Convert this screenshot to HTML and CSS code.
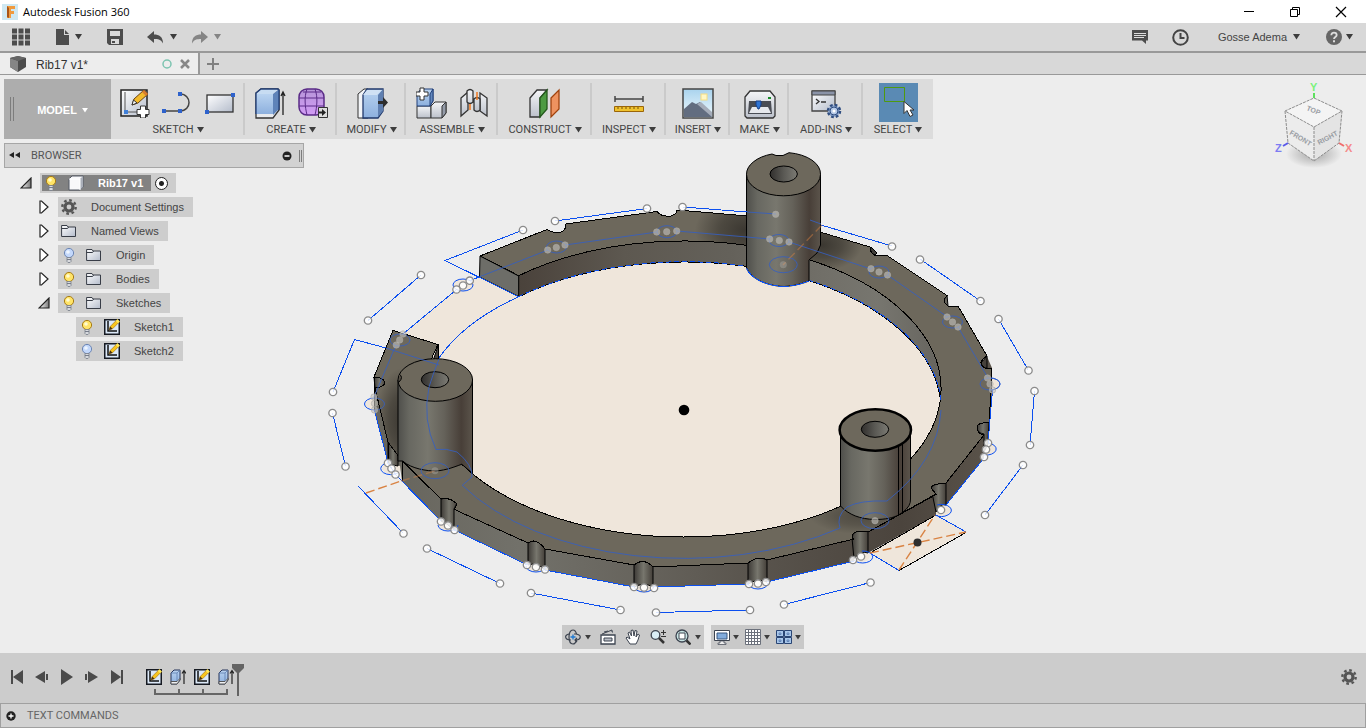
FILE: index.html
```html
<!DOCTYPE html>
<html lang="en">
<head>
<meta charset="utf-8">
<title>Autodesk Fusion 360</title>
<link rel="stylesheet" href="styles.css">
</head>
<body>
<svg class="defs" width="0" height="0" aria-hidden="true">
  <defs>
    <linearGradient id="gPaper" x1="0" y1="0" x2="1" y2="1"><stop offset="0" stop-color="#fff"/><stop offset="1" stop-color="#b4bccb"/></linearGradient>
    <linearGradient id="gBlue" x1="0" y1="0" x2="0" y2="1"><stop offset="0" stop-color="#b9d3f0"/><stop offset="1" stop-color="#8db0de"/></linearGradient>
    <linearGradient id="gMetal" x1="0" y1="0" x2="0" y2="1"><stop offset="0" stop-color="#f4f5f7"/><stop offset="1" stop-color="#bcc1cb"/></linearGradient>
    <linearGradient id="gPurple" x1="0" y1="0" x2="0" y2="1"><stop offset="0" stop-color="#b695d8"/><stop offset="1" stop-color="#d29cf5"/></linearGradient>
    <linearGradient id="gSky" x1="0" y1="0" x2="0" y2="1"><stop offset="0" stop-color="#a9d3ee"/><stop offset="1" stop-color="#f0fafd"/></linearGradient>
    <linearGradient id="gTri" x1="0" y1="0" x2="1" y2="0"><stop offset="0" stop-color="#fff"/><stop offset="1" stop-color="#777"/></linearGradient>
    <symbol id="bulbOn" viewBox="0 0 16 16"><circle cx="8" cy="6" r="4.600" fill="#ffe468" stroke="#a87c14"/><circle cx="7" cy="5" r="1.800" fill="#fffbd0"/><path d="M6 10.500h4v4l-1 1H7l-1-1z" fill="#d8dade" stroke="#777d8a" stroke-width=".8"/><path d="M6 12.500h4" stroke="#777d8a"/></symbol>
    <symbol id="bulbOff" viewBox="0 0 16 16"><circle cx="8" cy="6" r="4.600" fill="#c3d8fb" stroke="#6c86b4"/><circle cx="7" cy="5" r="1.800" fill="#eef5ff"/><path d="M6 10.500h4v4l-1 1H7l-1-1z" fill="#d8dade" stroke="#777d8a" stroke-width=".8"/><path d="M6 12.500h4" stroke="#777d8a"/></symbol>
    <symbol id="folder" viewBox="0 0 16 16"><path d="M.6 13.500V2.500h5.400l1 1.500h7.500v9.500z" fill="url(#gPaper)" stroke="#383d47"/><path d="M.6 5.500h6l1-1.500" fill="none" stroke="#383d47"/></symbol>
    <symbol id="gear" viewBox="0 0 16 16"><circle cx="8" cy="8" r="4" fill="none" stroke="#555" stroke-width="3.200"/><circle cx="8" cy="8" r="6.700" fill="none" stroke="#555" stroke-width="2.400" stroke-dasharray="2.630 2.630"/></symbol>
    <symbol id="box" viewBox="0 0 16 16"><path d="M1 4l3-3h11v11l-3 3H1z" fill="#f8f8fa" stroke="#555b66"/><path d="M12 4l3-3v11l-3 3z" fill="#a9aeb8"/><path d="M1 4h11v11" fill="none" stroke="#fff"/></symbol>
    <symbol id="sketch" viewBox="0 0 16 16"><rect x=".75" y=".75" width="14.500" height="14.500" fill="#dbe8f8" stroke="#161a22" stroke-width="1.500"/><path d="M4 2v10h9" fill="none" stroke="#111" stroke-width="1.500"/><path d="M5 11l1.200-3.500 7-7 2.300 2.300-7 7z" fill="#f9c51c" stroke="#9a6b0c" stroke-width=".6"/><path d="M5 11l1.200-3.500 2.300 2.300z" fill="#473014"/><path d="M11.800 2l1.800-1.800 2.200 2.200L14 4.200z" fill="#ffe95c"/></symbol>
    <symbol id="extrude" viewBox="0 0 16 16"><path d="M1 4l3-3h6v10l-3 4H1z" fill="url(#gBlue)" stroke="#26345a"/><path d="M1 12.500h6l3-3V11l-3 4H1z" fill="#f0f1f4" stroke="#555"/><path d="M7 12V4l3-3M1 4h6" fill="none" stroke="#5e7eb0" stroke-width=".8"/><path d="M14 15V2M12 4.500l2-3 2 3" fill="none" stroke="#222" stroke-width="1.200"/></symbol>
    <symbol id="caret" viewBox="0 0 7 6"><path d="M0 0h7L3.500 5.500z" fill="currentColor"/></symbol>
    <symbol id="shut" viewBox="0 0 10 14"><path d="M1 1h1.500L9 7l-6.500 6H1z" fill="#fff" stroke="#222" stroke-width="1.200"/></symbol>
    <symbol id="open" viewBox="0 0 12 12"><path d="M11 1v10H1z" fill="url(#gTri)" stroke="#222" stroke-width="1.200"/></symbol>
  </defs>
</svg>

<header class="titlebar">
  <svg class="logo" viewBox="0 0 16 16"><rect width="16" height="16" fill="#cfe8f2"/><path d="M5 2h8v3H9v2h3v3H9v4H5z" fill="#f09a3e"/><path d="M5 2l2 2v10l-2-1z" fill="#a95517"/></svg>
  <span class="title">Autodesk Fusion 360</span>
  <div class="win">
    <button aria-label="Minimize"><svg width="12" height="12"><path d="M1 5.500h10" stroke="#000"/></svg></button>
    <button aria-label="Restore"><svg width="12" height="12"><path d="M1.500 3.500h7v7h-7zM3.500 3V1.500h7v7H9" fill="none" stroke="#000"/></svg></button>
    <button aria-label="Close"><svg width="12" height="12"><path d="M1 1l10 10M11 1L1 11" stroke="#000" stroke-width="1.200"/></svg></button>
  </div>
</header>

<nav class="appbar">
  <button class="a-grid" aria-label="Data panel"><svg width="18" height="18"><path d="M0 3h18M0 9h18M0 15h18" stroke="#4d4d4d" stroke-width="5" stroke-dasharray="5 1.500"/></svg></button>
  <button class="a-file" aria-label="File"><svg width="14" height="16"><path d="M0 0h8v6h5v10H0z" fill="#4d4d4d"/><path d="M9 1l4 4H9z" fill="#4d4d4d"/></svg><svg class="caret"><use href="#caret"/></svg></button>
  <button class="a-save" aria-label="Save"><svg width="16" height="16"><path d="M0 0h16v16H2l-2-2z" fill="#4d4d4d"/><path d="M3 2h10v5H3zM4 10h8v5H4z" fill="#dadada"/><path d="M5 12h3v2H5z" fill="#4d4d4d"/></svg></button>
  <button class="a-undo" aria-label="Undo"><svg width="17" height="13"><path d="M0 6l7-6v3.500c5 0 9 2 9 9-2-4-5-4.500-9-4.500v4z" fill="#4d4d4d"/></svg><svg class="caret"><use href="#caret"/></svg></button>
  <button class="a-redo" aria-label="Redo"><svg width="17" height="13"><path d="M17 6l-7-6v3.500c-5 0-9 2-9 9 2-4 5-4.500 9-4.500v4z" fill="#858585"/></svg><svg class="caret"><use href="#caret"/></svg></button>
  <span class="grow"></span>
  <button class="a-chat" aria-label="Notifications"><svg width="16" height="16"><path d="M0 1h16v10.500h-2V15l-4-3.500H0z" fill="#4d4d4d"/><path d="M2 4.500h12M2 6.500h12M2 8.500h10" stroke="#ddd"/></svg></button>
  <button class="a-clock" aria-label="Job status"><svg width="17" height="17"><circle cx="8.500" cy="8.500" r="7.300" fill="none" stroke="#444" stroke-width="2"/><path d="M8.500 4v5h4" fill="none" stroke="#444" stroke-width="2"/></svg></button>
  <button class="a-user">Gosse Adema <svg class="caret"><use href="#caret"/></svg></button>
  <button class="a-help" aria-label="Help"><svg width="16" height="16"><circle cx="8" cy="8" r="8" fill="#666"/><path d="M5.300 6.200C5.300 2.600 10.700 2.800 10.700 6 10.700 8 8 8 8 10" fill="none" stroke="#ddd" stroke-width="1.800"/><path d="M7 11.300h2v2H7z" fill="#ddd"/></svg><svg class="caret"><use href="#caret"/></svg></button>
</nav>

<div class="tabs">
  <div class="tab">
    <svg width="16" height="16"><path d="M0 2l8-2 8 2v9l-8 5-8-5z" fill="#4c4c4c"/><path d="M0 2l8 3v11l-8-5z" fill="#858585"/><path d="M0 2l8-2 8 2-8 3z" fill="#666"/></svg>
    <span class="tabname">Rib17 v1*</span>
    <svg width="10" height="10"><circle cx="5" cy="5" r="4" fill="none" stroke="#7cc4b0" stroke-width="1.500"/></svg>
    <button aria-label="Close tab"><svg width="10" height="10"><path d="M1 1l8 8M9 1L1 9" stroke="#888" stroke-width="2.500"/></svg></button>
  </div>
  <button class="newtab" aria-label="New tab"><svg width="12" height="12"><path d="M0 6h12M6 0v12" stroke="#808080" stroke-width="2"/></svg></button>
</div>

<main class="work">
<svg class="scene" viewBox="0 75 1366 578" role="img" aria-label="Rib model with three posts">
  <defs>
    <linearGradient id="post" x1="0" y1="0" x2="1" y2="0"><stop offset="0" stop-color="#4f4f4b"/><stop offset=".15" stop-color="#686861"/><stop offset=".4" stop-color="#78776e"/><stop offset=".62" stop-color="#65625a"/><stop offset=".85" stop-color="#483f38"/><stop offset="1" stop-color="#5b544b"/></linearGradient>
    <linearGradient id="bore" x1="0" y1="0" x2="1" y2="0"><stop offset="0" stop-color="#312f2d"/><stop offset=".5" stop-color="#5a5954"/><stop offset="1" stop-color="#7c7b74"/></linearGradient>
    <linearGradient id="cut" x1="0" y1="0" x2="1" y2="0"><stop offset="0" stop-color="#3d3a36"/><stop offset=".5" stop-color="#77766d"/><stop offset="1" stop-color="#443f39"/></linearGradient>
    <linearGradient id="wall" gradientUnits="userSpaceOnUse" x1="518" y1="0" x2="941" y2="0"><stop offset="0" stop-color="#4a423b"/><stop offset=".25" stop-color="#5d5850"/><stop offset=".5" stop-color="#64615a"/><stop offset=".72" stop-color="#716f68"/><stop offset=".85" stop-color="#77766f"/><stop offset="1" stop-color="#66645e"/></linearGradient>
    <linearGradient id="rim" gradientUnits="userSpaceOnUse" x1="402" y1="0" x2="990" y2="0"><stop offset="0" stop-color="#68665e"/><stop offset=".2" stop-color="#72716a"/><stop offset=".4" stop-color="#67645d"/><stop offset=".6" stop-color="#59544d"/><stop offset=".85" stop-color="#4b443d"/><stop offset="1" stop-color="#5a534a"/></linearGradient>
    <radialGradient id="shade"><stop offset="0" stop-color="#26231f" stop-opacity=".7"/><stop offset=".5" stop-color="#26231f" stop-opacity=".45"/><stop offset="1" stop-color="#26231f" stop-opacity="0"/></radialGradient>
    <clipPath id="faceClip"><use href="#facePath"/></clipPath>
    <g id="dot"><circle r="3.700" fill="#fff" fill-opacity=".85" stroke="#8b8b8b" stroke-width="1.300"/></g>
    <g id="dim"><circle r="3.200" fill="#c4c3be" fill-opacity=".6" stroke="#aaa9a4" stroke-opacity=".6"/></g>
    <ellipse id="ring" rx="10" ry="6"/>
  </defs>

  <g fill="#efe6db">
    <ellipse cx="684" cy="410" rx="257" ry="148"/>
    <path d="M519 297L479 277 466 283 456 290 403 334 400 350 440 400z"/>
    <path d="M935 515l31 17-67 38-29-17z"/>
    <use href="#ring" x="463" y="285"/><use href="#ring" x="375" y="404"/><use href="#ring" x="392" y="468"/><use href="#ring" x="448" y="525"/><use href="#ring" x="536" y="566"/><use href="#ring" x="644" y="587"/><use href="#ring" x="758" y="583"/><use href="#ring" x="860" y="556"/><use href="#ring" x="941" y="510"/><use href="#ring" x="986" y="449"/><use href="#ring" x="990" y="384"/>
  </g>

  <path fill="url(#rim)" d="M374 377v33l14 53 12 3 2 15 39 40 4-60-40-40zM454 509v21l74 35v-22zM545 549v21l89 17v-22zM653 566v21l95-3v-21zM767 560v22l87-21v-22zM868 531v22l68-38v-21zM946 483v22l38-47v-23zM985 352l7 16v25l-4 50-4-8-8-8z"/>
  <g fill="url(#cut)" stroke="#000">
    <path d="M388 464v-22l10-1v25z"/><path d="M441 521v-22q8-3 16 4l-3 6v21q-7-7-13-9z"/><path d="M528 565v-22q8-6 17 1v26q-8-8-17-5z"/><path d="M634 587v-22q9-8 19 0v22q-9-5-19 0z"/><path d="M748 584v-21q8-9 19-3v22q-9-4-19 2z"/><path d="M852 538q0-9 16-7v22q-8-3-14 6z"/><path d="M931 488q3-5 15-5v22q-6-2-10 7z"/><path d="M989 422q-12 0-12 5 0 6 7 7v18l4-8z"/>
    <path d="M374 377q12 0 11 6-1 5-10 5z"/><path d="M871 247q-2 6 4 8l2-2zM947 295l-3 5v4l4 2zM987 356l-6 7q1 5 4 5h2z"/>
  </g>
  <path id="facePath" fill="#6d685c" stroke="#000" shape-rendering="crispEdges" d="M480 256L547 229.500Q552 233 560 232.500 566 231 566 224L657 211.500Q661 217 671 216 677 214 677 210L748 216 820 232 870 247Q870 254 877 256L887 255.500 947 295.500Q941 301 948 306L958 306 987 356Q976 363 985 368L992 368 991 393 989 422Q977 423 977 427 977 434 984 435L946 483Q931 484 931 488L936 494 868 532Q852 529 852 538L854 539 767 560Q758 555 748 563L653 567Q643 557 634 565L545 549Q536 537 528 543L454.500 509.500 457 504Q450 497 441 499L402 461 388 442 375 388Q385 387 385 382 382 377 374 377L393 330.500 438 344.500A257 148 0 0 0 684 537 257 148 0 0 0 941 389 257 148 0 0 0 518.700 275.700z"/>
  <g clip-path="url(#faceClip)">
    <ellipse cx="745" cy="230" rx="50" ry="34" fill="url(#shade)"/><ellipse cx="822" cy="245" rx="40" ry="26" fill="url(#shade)"/><ellipse cx="402" cy="420" rx="26" ry="52" fill="url(#shade)"/><ellipse cx="860" cy="516" rx="50" ry="18" fill="url(#shade)" opacity=".6"/>
  </g>
  <path fill="url(#wall)" stroke="#000" shape-rendering="crispEdges" d="M518.700 275.700A257 148 0 0 1 940.400 399.500 257 148 0 0 0 518.700 296.700z"/>
  <path fill="#6d6d68" stroke="#000" d="M480 256l38.700 20v20.500L479.500 277z"/>
  <path fill="#4b443d" stroke="#000" d="M438.500 344.500v15h-5z"/>
  <path fill="none" stroke="#0b4ff0" stroke-dasharray="5 3" shape-rendering="crispEdges" d="M518.700 296.700A257 148 0 0 1 941 400"/>

  <g stroke="#000" stroke-width="1">
    <path fill="url(#post)" d="M746.500 174.500V268C750 278 766 286 784 286.500 795 286 804 283 809 281V260L817 253 820.500 245V174.500z"/>
    <path fill="#6d685c" d="M746.500 174.500A37 21.300 0 0 1 772 154L776 155.500H783L789 152.700A37 21.300 0 0 1 820.500 174.500 37 21.300 0 0 1 746.500 174.500z"/>
    <ellipse cx="783.700" cy="174" rx="13.700" ry="8" fill="url(#bore)"/>
    <path fill="url(#post)" d="M398 380V461L402.500 461C412 469 427 471 436 471 447 470 454 467 461.700 464.300L472.500 473V380z"/>
    <ellipse cx="435.300" cy="380" rx="37.300" ry="21.300" fill="#6d685c"/><path d="M399 374q5 3 0 8" fill="#555046"/>
    <ellipse cx="435" cy="379.700" rx="13.700" ry="8" fill="url(#bore)"/>
    <path fill="url(#post)" d="M840.500 430V506C849 515 860 519 875 519.500 885 519.500 893 518 898.500 515L903 512Q911 506 910.500 499V430z"/>
    <path d="M898.500 444v71M902.500 442v70" fill="none"/>
    <ellipse cx="875.300" cy="430" rx="35.700" ry="20.700" fill="#6d685c" stroke-width="2.500"/>
    <ellipse cx="875" cy="429.300" rx="13.700" ry="8" fill="url(#bore)"/>
    <path d="M402.500 461l39 38.500M402.500 461v20M388 442v22M869 531.500l68-37.500M374.500 377v33" fill="none" shape-rendering="crispEdges"/>
    <path d="M899 570.500l67-38M870 553l66-38" fill="none" shape-rendering="crispEdges"/>
  </g>

  <g fill="none" stroke="#0b4ff0" shape-rendering="crispEdges">
    <path d="M523 230L445 260.500 518.700 296.700M555 221l92-12.500M683 207l64 5M821 225l71 21M920 259l60.500 42M998.500 319l30 51.500M1034.500 391l-4.500 54M1023 465l-38 50M870.500 582.500L784 604.500M750 610l-94 2.500M620.500 610L531 593M500 583.500l-73-35M403.500 533.500L358 486M345.500 466.500L332.500 413M333 392l21.500-52.500L386 348M368 320.500L421 275"/>
    <path d="M479 277l-10 4M456 290l-53 44M374.500 410l13.500 53 8 12 45 46M454.500 530l73 35M545 570l89 17M654 587l94-3M767 582l87-21M870 553l29 17.500M936 515l30 17M946 505l38-47M992.500 390l-4.500 53M746.500 268C750 278 766 286 784 286.500 795 286 804 283 809 281M518.700 296.700A257 148 0 0 0 439 358"/>
    <g shape-rendering="auto"><use href="#ring" x="463" y="285"/><path d="M374.500 398a10 6 0 0 0 0 12M384 464a10 6 0 1 0 14 9M438 525a10 6 0 0 0 20 0M526 566a10 6 0 0 0 20 0M634 586a10 6 0 1 0 20 0M748 583a10 6 0 1 0 20 0M854 560a10 6 0 1 0 8-9M937 505a10 6 0 1 1-2 10M988 443a10 6 0 1 1-4 12M990 378a10 6 0 0 1 0 12"/></g>
  </g>
  <g fill="none" stroke="#365fc0" stroke-opacity=".85">
    <path d="M479 277l69-27M565 245l92-13M677 231l93 8M789 242l82 27M887.500 275l60 42M958 327l30 51M396 345l-22 52M747 212l29 2M810 220l11 4M386 348l53 17"/>
    <use href="#ring" x="400" y="340"/><use href="#ring" x="556.500" y="247"/><use href="#ring" x="667" y="231.700"/><use href="#ring" x="779" y="240.500"/><use href="#ring" x="879" y="272"/><use href="#ring" x="952.500" y="322"/><use href="#ring" x="990" y="384"/>
    <path d="M374.500 398a10 6 0 0 1 0 12"/>
    <path d="M941 410Q938 461 887 501 860 500 847 507 836 516 840 528A257 148 0 0 1 462.300 485.300L472 477Q473 465 457 452 446 448 436 449.500 422 420 429 387 434 371 439 359"/>
    <ellipse cx="783.300" cy="264.700" rx="14" ry="8"/><ellipse cx="435" cy="470.700" rx="14" ry="8"/><ellipse cx="875" cy="520.700" rx="14" ry="8"/>
  </g>
  <g fill="none" stroke="#d98343" stroke-width="1.400" stroke-dasharray="9 4"><path d="M899 570l36-55M870 553l96-21M366 493l35-12"/><path d="M401 481l34-10M822 225l-39 40" stroke-opacity=".45"/></g>

  <g>
    <use href="#dot" x="523" y="230"/><use href="#dot" x="555" y="221"/><use href="#dot" x="647" y="208.500"/><use href="#dot" x="682.500" y="207"/><use href="#dot" x="892" y="246.500"/><use href="#dot" x="920" y="259.500"/><use href="#dot" x="980.500" y="301"/><use href="#dot" x="998.500" y="319"/><use href="#dot" x="1028.500" y="370.500"/><use href="#dot" x="1034.500" y="391"/><use href="#dot" x="1030" y="445"/><use href="#dot" x="1023" y="465"/><use href="#dot" x="985" y="515"/><use href="#dot" x="870.500" y="582.500"/><use href="#dot" x="784" y="604.500"/><use href="#dot" x="750" y="610"/><use href="#dot" x="656" y="612.500"/><use href="#dot" x="620.500" y="610"/><use href="#dot" x="531" y="593"/><use href="#dot" x="500" y="583.500"/><use href="#dot" x="427" y="548.500"/><use href="#dot" x="403.500" y="533.500"/><use href="#dot" x="345.500" y="466.500"/><use href="#dot" x="332.500" y="413"/><use href="#dot" x="333" y="392"/><use href="#dot" x="368" y="320.500"/><use href="#dot" x="421" y="275"/>
    <use href="#dot" x="456.500" y="289.500"/><use href="#dot" x="463" y="285.500"/><use href="#dot" x="469.700" y="280.700"/><use href="#dot" x="388" y="463"/><use href="#dot" x="391.500" y="468.500"/><use href="#dot" x="395.500" y="474.500"/><use href="#dot" x="441" y="521.500"/><use href="#dot" x="448" y="525.500"/><use href="#dot" x="454.500" y="530"/><use href="#dot" x="527" y="565"/><use href="#dot" x="536" y="567"/><use href="#dot" x="545" y="569.500"/><use href="#dot" x="634" y="587"/><use href="#dot" x="644" y="587.500"/><use href="#dot" x="654" y="588"/><use href="#dot" x="749" y="584"/><use href="#dot" x="758" y="583.500"/><use href="#dot" x="766" y="582"/><use href="#dot" x="853" y="560"/><use href="#dot" x="861" y="556.500"/><use href="#dot" x="941" y="510"/><use href="#dot" x="988" y="443"/><use href="#dot" x="986" y="449.500"/><use href="#dot" x="984" y="457"/>
  </g>
  <g>
    <use href="#dim" x="403" y="334"/><use href="#dim" x="399.700" y="340"/><use href="#dim" x="396.300" y="345"/><use href="#dim" x="374" y="397"/><use href="#dim" x="374.500" y="403.500"/><use href="#dim" x="374.500" y="410"/><use href="#dim" x="547.700" y="250"/><use href="#dim" x="556.300" y="247.500"/><use href="#dim" x="565" y="245"/><use href="#dim" x="656.700" y="232"/><use href="#dim" x="666.700" y="231.700"/><use href="#dim" x="676.700" y="231"/><use href="#dim" x="769.700" y="239"/><use href="#dim" x="779.300" y="240.500"/><use href="#dim" x="789" y="242"/><use href="#dim" x="775.700" y="214.300"/><use href="#dim" x="871" y="268.700"/><use href="#dim" x="879" y="272"/><use href="#dim" x="887.500" y="275"/><use href="#dim" x="947" y="317"/><use href="#dim" x="952.500" y="322"/><use href="#dim" x="958" y="327"/><use href="#dim" x="987.500" y="378"/><use href="#dim" x="990" y="384"/><use href="#dim" x="992.500" y="390"/><use href="#dim" x="875" y="520.700"/>
    <g opacity=".5"><use href="#dim" x="435" y="470.700"/><use href="#dim" x="783.300" y="264.700"/></g>
  </g>
  <circle cx="684" cy="410" r="5.300"/><circle cx="917.500" cy="542.500" r="4" fill="#2e2e2e"/>
</svg>

<svg class="cube" viewBox="1270 78 90 90" role="img" aria-label="View cube">
  <defs><radialGradient id="cs"><stop offset="0" stop-color="#888" stop-opacity=".7"/><stop offset="1" stop-color="#888" stop-opacity="0"/></radialGradient></defs>
  <ellipse cx="1314" cy="154" rx="28" ry="14" fill="url(#cs)"/>
  <path d="M1314 98l28 13-28 16-29-16z" fill="#f4f4f4"/><path d="M1285 111l29 16v34l-26-18z" fill="#ececec"/><path d="M1342 111l-28 16v34l25-18z" fill="#e4e4e4"/>
  <path d="M1314 98l28 13-28 16-29-16zM1285 111l3 32 26 18 25-18 3-32M1314 127v34" fill="none" stroke="#8c8c8c" stroke-dasharray="3 1"/>
  <g class="cubetext"><text transform="translate(1289 134) rotate(31)">FRONT</text><text transform="translate(1319 145) rotate(-28)">RIGHT</text><text transform="translate(1306 110) rotate(22)">TOP</text></g>
  <path d="M1314 93v5" stroke="#5de05d" stroke-width="2"/><path d="M1283 146l5-3" stroke="#5a5aea" stroke-width="2"/><path d="M1339 143l5 3" stroke="#f06c6c" stroke-width="2"/>
  <g class="axis"><text x="1310" y="91" fill="#7bf27b">Y</text><text x="1275" y="152" fill="#7c7cf2">Z</text><text x="1345" y="152" fill="#f58a8a">X</text></g>
</svg>

<div class="ribbon">
  <button class="model"><i class="grip"></i>MODEL <svg class="caret"><use href="#caret"/></svg></button>
  <section><div class="icons">
    <svg width="30" height="30"><rect x="1" y="2" width="26" height="26" fill="url(#gPaper)" stroke="#222" stroke-width="1.500"/><path d="M5 4v20h20" fill="none" stroke="#555"/><rect x="4" y="22" width="4" height="4" fill="#3f7fd8"/><path d="M12 17l2-6L24 2l4 4-10 9z" fill="#f3ba2c" stroke="#6b4310"/><path d="M12 17l1.500-5 3.500 3z" fill="#fff" stroke="#333"/><path d="M24 2l4 4-2 2-4-4z" fill="#d87d31"/><path d="M20.500 18h5v3.500H29v5h-3.500V30h-5v-3.500H17v-5h3.500z" fill="#fff" stroke="#333"/></svg>
    <svg width="32" height="30"><path d="M3 23h16c12 0 12-17 0-17" fill="none" stroke="#444" stroke-width="1.500"/><path d="M1 21h4v4H1zM17 21h4v4h-4zM17 4h4v4h-4z" fill="#2e62cc"/></svg>
    <svg width="32" height="30"><rect x="3" y="7" width="26" height="17" fill="url(#gPaper)" stroke="#333" stroke-width="1.300"/><path d="M1 22h4v4H1zM27 5h4v4h-4z" fill="#2e62cc"/></svg>
  </div><button>SKETCH <svg class="caret"><use href="#caret"/></svg></button></section>
  <section><div class="icons">
    <svg width="32" height="32"><path d="M2 6l5-4h17l1 1v20l-6 8H2z" fill="#e8eaee" stroke="#333" stroke-width="1.300"/><path d="M2 7h17v20H2z" fill="url(#gBlue)"/><path d="M2 7l5-5h17l-5 5z" fill="#c7dcf2"/><path d="M19 7l6-5v20l-6 6z" fill="#5e83b9"/><path d="M2 27V6l5-4h17l1 1v20" fill="none" stroke="#23407a" stroke-width="1.300"/><path d="M29 28V6M27 9l2-4 2 4" fill="none" stroke="#222" stroke-width="1.300"/></svg>
    <svg width="32" height="32"><rect x="2" y="2" width="25" height="26" rx="8" fill="url(#gPurple)" stroke="#5a2b87" stroke-width="1.500"/><path d="M2 11h25M2 19h25M10 2C7 10 8 20 10 28M18 2c3 8 2 18 0 26M6 5h18" fill="none" stroke="#5a2b87"/><path d="M21.500 20.500h9v10h-9z" fill="#ddd" stroke="#333"/><path d="M22 24.500h3V22l4 3.500-4 3.500v-2.500h-3z" fill="#222"/></svg>
  </div><button>CREATE <svg class="caret"><use href="#caret"/></svg></button></section>
  <section><div class="icons">
    <svg width="32" height="32"><path d="M2 7l6-5h4v29H2z" fill="#f2f4f7" stroke="#333"/><path d="M7 8l4-6h16v22l-5 7H7z" fill="url(#gBlue)" stroke="#20386b" stroke-width="1.300"/><path d="M22 8l5-6v22l-5 6z" fill="#5f7fb0"/><path d="M7 8l4-5h15l-5 5z" fill="#d0e1f4"/><path d="M22 14h5v-4l5 5.500-5 5.500v-4h-5z" fill="#2d2d2d"/></svg>
  </div><button>MODIFY <svg class="caret"><use href="#caret"/></svg></button></section>
  <section><div class="icons">
    <svg width="32" height="32"><path d="M1 19h14v12H1z" fill="url(#gMetal)" stroke="#333"/><path d="M15 19l4-4h11v11l-4 5H15z" fill="url(#gMetal)" stroke="#333"/><path d="M26 19l4-4v11l-4 5z" fill="#949ba8" stroke="#333"/><path d="M1 7l4-5h12v12l-3 5H1z" fill="url(#gBlue)" stroke="#23407a"/><path d="M14 7l3-5v12l-3 5z" fill="#6388bd" stroke="#23407a"/><path d="M4 1h4v4h4v4H8v4H4V9H0V5h4z" fill="#fff" stroke="#333"/></svg>
    <svg width="30" height="32"><path d="M2 11l7-6v18l-7 6zM21 6l7 5v18l-7-5z" fill="url(#gMetal)" stroke="#333" stroke-width="1.300"/><path d="M8 4q3-3 6 0v11q-3 3-6 0zM15 12q3-3 6 0v11q-3 3-6 0z" fill="url(#gMetal)" stroke="#333" stroke-width="1.300"/><path d="M11 17v6M18 5v8" stroke="#f07820" stroke-width="1.500"/></svg>
  </div><button>ASSEMBLE <svg class="caret"><use href="#caret"/></svg></button></section>
  <section><div class="icons">
    <svg width="32" height="32"><path d="M1 11l7-8h10l-7 8v19H1z" fill="url(#gMetal)" stroke="#333" stroke-width="1.300"/><path d="M11 11l7-8v19l-7 8z" fill="#4d9b42" stroke="#24591d" stroke-width="1.300"/><path d="M22 11l8-8v19l-8 8z" fill="#ee9360" stroke="#a0430e" stroke-width="1.300"/></svg>
  </div><button>CONSTRUCT <svg class="caret"><use href="#caret"/></svg></button></section>
  <section><div class="icons">
    <svg width="32" height="32"><path d="M2 12h28M2 9v6M30 9v6" stroke="#444" stroke-width="1.500"/><path d="M1.500 19.500h29v5h-29z" fill="#efc22d" stroke="#9b6508"/><path d="M5 20v2M9 20v2M13 20v2M17 20v2M21 20v2M25 20v2" stroke="#76500b"/></svg>
  </div><button>INSPECT <svg class="caret"><use href="#caret"/></svg></button></section>
  <section><div class="icons">
    <svg width="32" height="32"><rect x="1" y="2" width="30" height="29" fill="url(#gSky)" stroke="#444" stroke-width="1.500"/><rect x="19" y="7" width="6" height="6" fill="#fff7c5" stroke="#f4dc82"/><path d="M2 22l8-7 4 2 4-2 12 14v1H2z" fill="#626d80"/><path d="M15 17l4-2 11 10v5z" fill="#a5adba"/></svg>
  </div><button>INSERT <svg class="caret"><use href="#caret"/></svg></button></section>
  <section><div class="icons">
    <svg width="32" height="32"><path d="M1 10l5-6h20l5 6v19l-2 2H3l-2-2z" fill="url(#gMetal)" stroke="#333" stroke-width="1.300"/><path d="M5 14h22l1 13H4z" fill="#4a4d54"/><path d="M8 20h16l3 6H5z" fill="#e6e8ec"/><path d="M12 14h5v4l-2 4h-1l-2-4z" fill="#2e74d4" stroke="#173f86"/><path d="M24 10h3v2h-3z" fill="#168a27"/></svg>
  </div><button>MAKE <svg class="caret"><use href="#caret"/></svg></button></section>
  <section><div class="icons">
    <svg width="32" height="32"><path d="M2 4h23v20H2z" fill="url(#gPaper)" stroke="#444" stroke-width="1.300"/><path d="M2 4h23v4H2z" fill="#8a93a8" stroke="#444"/><path d="M6 12l3 2.500L6 17M11 15h5" fill="none" stroke="#333" stroke-width="1.300"/><circle cx="24" cy="24" r="6" fill="#9bb3d8" stroke="#2f4d80" stroke-width="2.500" stroke-dasharray="2.700 2"/><circle cx="24" cy="24" r="4" fill="#b5c9e7" stroke="#2f4d80"/><circle cx="24" cy="24" r="1.500" fill="#fff"/></svg>
  </div><button>ADD-INS <svg class="caret"><use href="#caret"/></svg></button></section>
  <section><div class="icons selected">
    <svg width="39" height="39"><path d="M5.500 4.500h20v14h-20z" fill="none" stroke="#4f9a10"/><path d="M25 18.500v12l3-3 3 6 3-1.500-3-5h4z" fill="#fff" stroke="#333"/></svg>
  </div><button>SELECT <svg class="caret"><use href="#caret"/></svg></button></section>
</div>

<aside class="browser">
  <h2><svg width="11" height="7"><path d="M5 0v6L0 3zM11 0v6L6 3z" fill="#222"/></svg><span>BROWSER</span><button aria-label="Collapse"><svg width="10" height="10"><circle cx="5" cy="5" r="4.500" fill="#222"/><path d="M2.500 5h5" stroke="#fff" stroke-width="1.500"/></svg></button><i class="grip"></i></h2>
  <ul>
    <li class="l0"><svg class="tri"><use href="#open"/></svg><div class="row root"><div class="active"><svg><use href="#bulbOn"/></svg><svg><use href="#box"/></svg><b>Rib17 v1</b></div><input type="radio" checked aria-label="Activate component"></div></li>
    <li class="l1"><svg class="tri shut"><use href="#shut"/></svg><div class="row"><svg><use href="#gear"/></svg><span>Document Settings</span></div></li>
    <li class="l1"><svg class="tri shut"><use href="#shut"/></svg><div class="row"><svg><use href="#folder"/></svg><span>Named Views</span></div></li>
    <li class="l1"><svg class="tri shut"><use href="#shut"/></svg><div class="row"><svg><use href="#bulbOff"/></svg><svg><use href="#folder"/></svg><span>Origin</span></div></li>
    <li class="l1"><svg class="tri shut"><use href="#shut"/></svg><div class="row"><svg><use href="#bulbOn"/></svg><svg><use href="#folder"/></svg><span>Bodies</span></div></li>
    <li class="l1"><svg class="tri"><use href="#open"/></svg><div class="row"><svg><use href="#bulbOn"/></svg><svg><use href="#folder"/></svg><span>Sketches</span></div></li>
    <li class="l2"><div class="row"><svg><use href="#bulbOn"/></svg><svg><use href="#sketch"/></svg><span>Sketch1</span></div></li>
    <li class="l2"><div class="row"><svg><use href="#bulbOff"/></svg><svg><use href="#sketch"/></svg><span>Sketch2</span></div></li>
  </ul>
</aside>

<div class="navbar">
  <div>
    <button aria-label="Orbit"><svg width="16" height="16"><path d="M8 15C5 15 4 11 4 8s1-7 4-7c2 0 3 2 3.500 4M11.500 11c-.5 2-1.500 4-3.500 4" fill="none" stroke="#3d4450" stroke-width="1.200"/><path d="M6 11C-1 11-1 5 5 5M9 5h2c6 1 5 5 1 6h-2M12 9l-2 2 2 2" fill="none" stroke="#3d4450" stroke-width="1.200"/><path d="M5.500 8h5M8 5.500v5" stroke="#1c78d2" stroke-width="1.300"/></svg><svg class="caret"><use href="#caret"/></svg></button>
    <button aria-label="Look at"><svg width="16" height="16"><path d="M1 6h14v9H1z" fill="#fff" stroke="#3d4450" stroke-width="1.300"/><path d="M4 9h8v3H4z" fill="#b9bdc5" stroke="#3d4450"/><path d="M2 5l10-4v2h1M4 3l4-1" fill="none" stroke="#3d4450"/></svg></button>
    <button aria-label="Pan"><svg width="16" height="16"><path d="M5 15L1 9l1-1 3 2-2-6 1.500-1L6.500 7 6 1.500 8 1l1 6 1-5.500 2 .5-1 6 2-3 1.500 1-1.500 5-2 4z" fill="#fff" stroke="#3d4450"/></svg></button>
    <button aria-label="Zoom"><svg width="16" height="16"><circle cx="5.500" cy="6" r="4.300" fill="#d9edf5" stroke="#3d4450" stroke-width="1.300"/><path d="M9 9l5 5" stroke="#333" stroke-width="2.500"/><path d="M11 3.500h5M13.500 1v5M11 7.500h5" stroke="#333"/></svg></button>
    <button aria-label="Fit"><svg width="16" height="16"><circle cx="7" cy="7" r="6" fill="#c9e5e4" stroke="#3d4450" stroke-width="1.300"/><path d="M4 4h6v6H4z" fill="#fff" stroke="#3d4450"/><path d="M11.500 11.500l4 4" stroke="#333" stroke-width="2.500"/></svg><svg class="caret"><use href="#caret"/></svg></button>
  </div>
  <div>
    <button aria-label="Display settings"><svg width="16" height="16"><path d="M.5 1.500h15v10H.5z" fill="#fff" stroke="#3d4450"/><path d="M3 4h10v6H3z" fill="#81abdc" stroke="#38577f"/><path d="M6 12h4v2h2v1.500H4V14h2z" fill="#eee" stroke="#3d4450" stroke-width=".7"/></svg><svg class="caret"><use href="#caret"/></svg></button>
    <button aria-label="Grid and snaps"><svg width="16" height="16"><path d="M.5.500h15v15H.5z" fill="#fff"/><path d="M.5.500h15v15H.500zM3.500 0v16M6.500 0v16M9.500 0v16M12.500 0v16M0 3.500h16M0 6.500h16M0 9.500h16M0 12.500h16" fill="none" stroke="#6b707b"/></svg><svg class="caret"><use href="#caret"/></svg></button>
    <button aria-label="Viewports"><svg width="16" height="16"><path d="M.5 1.500h7v6h-7zM8.500 1.500h7v6h-7zM.5 8.500h7v6h-7zM8.500 8.500h7v6h-7z" fill="#a9c7ea" stroke="#294574"/><path d="M3 4h2v1.500H3zM11 4h2v1.500h-2zM3 11h2v1.500H3zM11 11h2v1.500h-2z" fill="none" stroke="#5579ae" stroke-width=".8"/></svg><svg class="caret"><use href="#caret"/></svg></button>
  </div>
</div>
</main>

<footer class="timeline">
  <div class="play">
    <button aria-label="To start"><svg width="14" height="14"><path d="M1 0h2v14H1zM13 0v14L3 7z" fill="#4a4a4a"/></svg></button>
    <button aria-label="Step back"><svg width="14" height="14"><path d="M10 1v12L0 7zM11 4h2v6h-2z" fill="#4a4a4a"/></svg></button>
    <button aria-label="Play"><svg width="14" height="16"><path d="M1 0l12 8-12 8z" fill="#4a4a4a"/></svg></button>
    <button aria-label="Step forward"><svg width="14" height="14"><path d="M3 1v12l10-6zM0 4h2v6H0z" fill="#4a4a4a"/></svg></button>
    <button aria-label="To end"><svg width="14" height="14"><path d="M13 0h-2v14h2zM1 0v14l10-7z" fill="#4a4a4a"/></svg></button>
  </div>
  <div class="history">
    <div class="features">
      <button aria-label="Sketch1"><svg><use href="#sketch"/></svg></button><button aria-label="Extrude1"><svg><use href="#extrude"/></svg></button><button aria-label="Sketch2"><svg><use href="#sketch"/></svg></button><button aria-label="Extrude2"><svg><use href="#extrude"/></svg></button>
    </div>
    <svg width="74" height="6"><path d="M1 0v5h72V0M25 5V0M49 5V0" fill="none" stroke="#666" stroke-width="2"/></svg>
  </div>
  <svg class="marker" width="12" height="32"><path d="M0 0h12v4L7 9v23H5V9L0 4z" fill="#646464"/></svg>
  <span class="grow"></span>
  <button class="prefs" aria-label="Preferences"><svg width="16" height="16"><use href="#gear"/></svg></button>
</footer>
<div class="commands"><button aria-label="Expand"><svg width="10" height="10"><circle cx="5" cy="5" r="4.700" fill="#222"/><path d="M2.500 5h5M5 2.500v5" stroke="#fff" stroke-width="1.300"/></svg></button><span>TEXT COMMANDS</span></div>
</body>
</html>
```
FILE: styles.css
```css
* { box-sizing: border-box; }
body {
  margin: 0;
  height: 100vh;
  display: flex;
  flex-direction: column;
  overflow: hidden;
  background: #ededed;
  font: 11px/14px "Liberation Sans", Arial, sans-serif;
  color: #444;
}
button {
  display: flex;
  align-items: center;
  padding: 0;
  border: 0;
  background: none;
  font: inherit;
  color: inherit;
}
svg { display: block; flex: none; }
.defs { position: absolute; }
.grow { flex: 1; }
.caret { width: 7px; height: 6px; color: #3d3d3d; }

.titlebar {
  display: flex;
  align-items: center;
  height: 23px;
  padding-left: 2px;
  background: #fff;
}
.logo { width: 16px; height: 16px; margin-right: 5px; }
.title { font: 11px/16px "Open Sans", "Noto Sans", sans-serif; color: #000; }
.win { display: flex; gap: 34px; margin-left: auto; padding-right: 19px; }

.appbar {
  display: flex;
  align-items: center;
  height: 30px;
  padding: 0 13px 0 12px;
  background: #d8d8d8;
  border-bottom: 2px solid #999;
}
.appbar button { gap: 6px; }
.a-file { margin-left: 26px; }
.appbar .a-file { gap: 5px; }
.a-save { margin-left: 25px; }
.a-undo { margin-left: 24px; }
.a-redo { margin-left: 14px; }
.a-redo .caret { color: #858585; }
.a-clock { margin-left: 24px; }
.a-user { margin-left: 29px; }
.a-help { margin-left: 26px; }
.appbar .a-help { gap: 4px; }

.tabs {
  display: flex;
  height: 22px;
  background: #d8d8d8;
  border-bottom: 1px solid #999;
}
.tab {
  display: flex;
  align-items: center;
  width: 200px;
  padding: 0 8px 0 10px;
  background: #ededed;
  border-right: 2px solid #999;
}
.tabname { flex: 1; margin-left: 10px; padding-top: 3px; font-size: 12px; color: #333; }
.tab button { margin-left: 8px; }
.newtab { margin-left: 7px; }

.work { position: relative; flex: 1; min-height: 0; padding: 4px; }
.scene { position: absolute; inset: 0; width: 100%; height: 100%; }
.cube { position: absolute; top: 3px; right: 6px; width: 90px; height: 90px; }
.cubetext { font: bold 7px "Liberation Sans", sans-serif; fill: #999da3; }
.axis { font: bold 11px "Liberation Sans", sans-serif; }

.ribbon {
  position: relative;
  display: grid;
  grid-template-columns: 107px 134px 92px 69px 92px 94px 74px 64px 59px 74px 70px;
  width: max-content;
  height: 60px;
  background: #dcdcdc;
}
.model {
  position: relative;
  justify-content: center;
  gap: 5px;
  padding: 2px 0 0 10px;
  background: #adadad;
  color: #fff;
  font-weight: bold;
}
.model .caret { color: #fff; width: 6px; height: 5px; }
.grip { width: 4px; border: solid #7d7d7d; border-width: 0 1px; }
.model .grip { position: absolute; left: 6px; top: 18px; height: 24px; }
.ribbon section {
  display: flex;
  flex-direction: column;
  align-items: center;
  padding-top: 4px;
  background: linear-gradient(#cacaca, #cacaca) right center / 2px 52px no-repeat;
}
.ribbon section:last-child { background: none; }
.ribbon section button { gap: 3px; font: 11px/16px Roboto, "Liberation Sans", sans-serif; }
.icons { display: flex; align-items: center; justify-content: center; gap: 11px; height: 39px; }
.icons.selected { width: 39px; background: #5a8ab4; }

.browser { position: relative; width: 300px; margin-top: 4px; }
.browser h2 {
  display: flex;
  align-items: center;
  height: 25px;
  margin: 0;
  padding: 0 1px 0 4px;
  border: 1px solid #a6a6a6;
  background: #d2d2d2;
  font: 11px/14px Roboto, "Liberation Sans", sans-serif;
}
.browser h2 span { flex: 1; margin-left: 11px; color: #555; }
.browser h2 .grip { width: 3px; height: 12px; margin-left: 7px; }
.browser ul { margin: 5px 0 0; padding: 0; list-style: none; }
.browser li { display: flex; align-items: center; height: 20px; margin-bottom: 4px; }
.l0 { padding-left: 16px; }
.l1 { padding-left: 34px; }
.l2 { padding-left: 72px; }
.tri { width: 12px; height: 12px; margin-right: 8px; }
.tri.shut { width: 12px; height: 14px; }
.row {
  display: flex;
  align-items: center;
  gap: 9px;
  height: 20px;
  padding: 0 9px 0 3px;
  background: #cdcdcd;
}
.row svg { width: 16px; height: 16px; }
.row span, .row b { margin-left: 5px; }
.row.root { padding: 0 8px 0 2px; gap: 4px; }
.active { display: flex; align-items: center; gap: 9px; height: 16px; padding: 0 8px 0 1px; background: #828282; color: #fff; }
.root input {
  appearance: none;
  width: 13px;
  height: 13px;
  margin: 0;
  border: 1px solid #222;
  border-radius: 50%;
  background: radial-gradient(circle, #222 0 2px, #fff 3px);
}

.navbar { position: absolute; left: 50%; bottom: 4px; transform: translateX(-50%); display: flex; gap: 7px; }
.navbar div { display: flex; align-items: center; gap: 9px; height: 24px; padding: 0 3px; background: #c9c9c9; }
.navbar div + div { gap: 6px; }
.navbar button { gap: 4px; }
.navbar div + div button { gap: 3px; }
.navbar .caret { width: 6px; height: 5px; }

.timeline { display: flex; align-items: center; height: 50px; padding: 0 9px 0 10px; background: #ccc; }
.play { display: flex; align-items: center; gap: 11px; padding-bottom: 2px; }
.history { display: flex; flex-direction: column; gap: 4px; margin: 7px 0 0 22px; }
.features { display: flex; gap: 8px; }
.features svg { width: 16px; height: 16px; }
.history > svg { margin-left: 8px; }
.marker { margin-top: 3px; margin-left: -2px; }
.prefs { padding-bottom: 2px; }
.commands {
  display: flex;
  align-items: center;
  gap: 11px;
  height: 25px;
  padding-left: 5px;
  border: 1px solid #a0a0a0;
  background: #d2d2d2;
  font: 11px/14px Roboto, "Liberation Sans", sans-serif;
  color: #666;
}
```
